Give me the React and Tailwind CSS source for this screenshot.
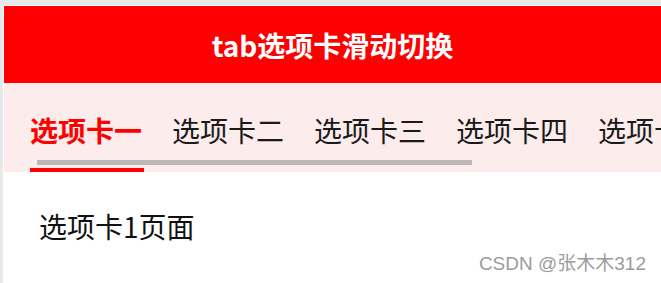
export default function App() {
  const tabs = ["选项卡一", "选项卡二", "选项卡三", "选项卡四", "选项卡五", "选项卡六"];
  const font = { fontFamily: '"Noto Sans CJK SC", "Noto Sans", sans-serif' };
  return (
    <div className="relative h-screen overflow-hidden bg-[#e8eaea] pt-[5px] pl-[3px]" style={font}>
      <div className="flex h-full flex-col border-t border-l border-white bg-white">
        <div className="flex h-[77px] shrink-0 items-center justify-center bg-[#ff0000]">
          <span className="text-[28px] font-bold leading-[28px] text-white">tab选项卡滑动切换</span>
        </div>
        <div className="relative h-[89px] shrink-0 overflow-hidden bg-[#fcecec] pl-[26px] pt-[33px]">
          <div className="flex gap-[30px] whitespace-nowrap">
            {tabs.map((t, i) => (
              <div key={t} className="flex shrink-0 flex-col items-start">
                <span
                  className={
                    i === 0
                      ? "text-[28px] font-bold leading-[28px] text-[#ff0000]"
                      : "text-[28px] leading-[28px] text-[#1a1a1a]"
                  }
                >
                  {t}
                </span>
                {i === 0 ? <div className="-mr-[2px] mt-[24px] h-[4px] w-[114px] bg-[#ff0000]" /> : null}
              </div>
            ))}
          </div>
          <div className="absolute left-[33px] top-[77px] h-[5px] w-[435px] bg-[#bdb7b7]" />
        </div>
        <div className="pl-[35px] pt-[40px]">
          <span className="text-[28px] leading-[28px] text-[#111]">选项卡1页面</span>
        </div>
      </div>
      <div
        className="absolute bottom-[10px] right-[15px] text-[19px] leading-[19px] text-[#9b9b9b]"
        style={{ fontFamily: '"Liberation Sans", "Noto Sans CJK SC", sans-serif' }}
      >
        CSDN @张木木312
      </div>
    </div>
  );
}
